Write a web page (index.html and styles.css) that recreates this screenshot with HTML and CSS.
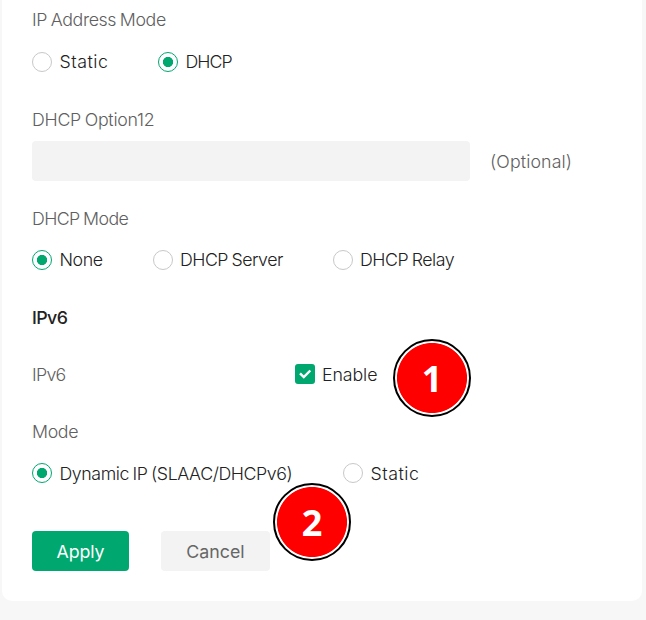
FILE: index.html
```html
<!DOCTYPE html>
<html lang="en">
<head>
<meta charset="utf-8">
<title>IP Settings</title>
<link rel="stylesheet" href="styles.css">
</head>
<body>
<form class="card">
  <div class="field">
    <div class="label t-address">IP Address Mode</div>
    <div class="options">
      <label class="option w-static"><span class="radio"></span><span class="t-static">Static</span></label>
      <label class="option"><span class="radio on"></span><span class="t-dhcp">DHCP</span></label>
    </div>
  </div>
  <div class="field">
    <div class="label t-option">DHCP Option12</div>
    <div class="input-row"><div class="input"></div><span class="hint">(Optional)</span></div>
  </div>
  <div class="field">
    <div class="label t-dmode">DHCP Mode</div>
    <div class="options">
      <label class="option w-none"><span class="radio on"></span><span class="t-none">None</span></label>
      <label class="option w-server"><span class="radio"></span><span class="t-server">DHCP Server</span></label>
      <label class="option"><span class="radio"></span><span class="t-relay">DHCP Relay</span></label>
    </div>
  </div>
  <h2 class="heading">IPv6</h2>
  <div class="switch-row">
    <span class="label switch-label t-ipv6">IPv6</span>
    <label class="option"><svg class="check" viewBox="0 0 20 20"><rect width="20" height="20" rx="3"/><path d="M5 9.3l3.8 3.8 6.5-6.6"/></svg><span class="t-enable">Enable</span></label>
    <span class="badge badge-one">1</span>
  </div>
  <div class="field mode">
    <div class="label t-mode">Mode</div>
    <div class="options">
      <label class="option w-dynamic"><span class="radio on"></span><span class="t-dynamic">Dynamic IP (SLAAC/DHCPv6)</span></label>
      <label class="option"><span class="radio"></span><span class="t-static">Static</span></label>
    </div>
  </div>
  <div class="actions">
    <button type="button" class="btn apply">Apply</button>
    <button type="button" class="btn cancel">Cancel</button>
    <span class="badge badge-two">2</span>
  </div>
</form>
</body>
</html>
```
FILE: styles.css
```css
* { box-sizing: border-box; }
body { margin: 0; background: #f7f7f7; font: 300 17.8px/23px Inter, "Liberation Sans", sans-serif; color: #222; word-spacing: -1px; overflow: hidden; }
.card { width: 640px; height: 601px; margin-left: 2px; padding: 8px 30px 30px; background: #fff; border-radius: 0 0 10px 10px; }
.field { height: 99px; }
.field:first-child { height: 100px; }
.field:first-child .options { margin-top: 11px; }
.label { height: 23px; color: #606060; white-space: nowrap; }
.t-address { letter-spacing: -.37px; }
.t-static { letter-spacing: .5px; }
.t-dhcp { letter-spacing: -1px; }
.t-option { letter-spacing: -.27px; }
.t-dmode { letter-spacing: -.6px; }
.t-none { letter-spacing: -.45px; }
.t-server { letter-spacing: -.52px; }
.t-relay { letter-spacing: -.48px; }
.t-ipv6 { letter-spacing: -.7px; }
.t-enable { letter-spacing: -.1px; }
.t-mode { letter-spacing: -.35px; }
.t-dynamic { letter-spacing: -.43px; }
.options { display: flex; align-items: center; height: 39px; margin-top: 10px; }
.option { display: flex; align-items: center; gap: 7.5px; flex: none; white-space: nowrap; }
.radio { width: 20px; height: 20px; border: 1px solid #c8c8c8; border-radius: 50%; flex: none; }
.radio.on { border-color: #00a870; background: radial-gradient(circle, #00a870 4.8px, transparent 5.4px); }
.w-static { width: 126px; }
.w-none { width: 120.5px; }
.w-server { width: 180px; }
.w-dynamic { width: 311px; }
.input-row { display: flex; align-items: center; height: 40px; margin-top: 10px; gap: 20px; }
.input { width: 438px; height: 40px; border-radius: 4px; background: #f3f3f3; }
.hint { color: #606060; letter-spacing: .12px; }
.heading { margin: 0 0 25px; font-size: 17.8px; line-height: 23px; font-weight: 500; letter-spacing: -.6px; color: #222; }
.switch-row { position: relative; display: flex; align-items: center; height: 40px; margin-bottom: 26px; }
.switch-label { width: 262.5px; }
.check { width: 20px; height: 20px; flex: none; }
.check rect { fill: #00a870; }
.check path { fill: none; stroke: #fff; stroke-width: 2.4; }
.mode { height: 111px; }
.mode .options { height: 40px; }
.actions { position: relative; display: flex; gap: 32px; }
.btn { height: 40px; padding: 1px 0 0; border: 0; border-radius: 4px; font: 400 17.8px/39px Inter, sans-serif; }
.apply { width: 97px; background: #00a870; color: #fff; letter-spacing: -.1px; }
.cancel { width: 109px; background: #f3f3f3; color: #666; }
.badge { position: absolute; display: flex; align-items: center; justify-content: center; width: 78px; height: 78px; border: 2px solid #000; border-radius: 50%; background: radial-gradient(circle closest-side, red 34.6px, #fff 35.4px); color: #fff; font: 700 36px/1 "Noto Sans", sans-serif; padding-top: 2px; }
.badge-one { left: 361px; top: -15px; }
.badge-two { left: 241px; top: -48px; }
```
